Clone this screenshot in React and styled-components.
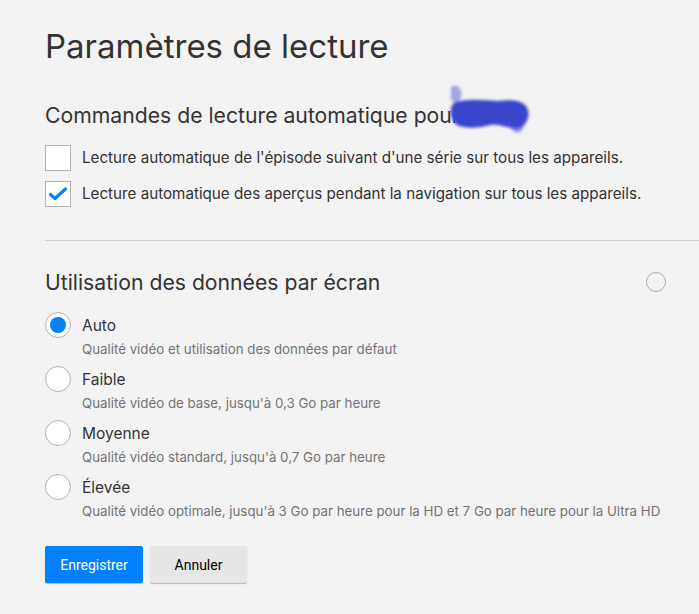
import styled, { createGlobalStyle } from "styled-components";

const GlobalStyle = createGlobalStyle`
  html, body {
    margin: 0;
    background: #f3f3f3;
  }
  body {
    font-family: "Inter", "Roboto", "Liberation Sans", Arial, sans-serif;
    color: #333;
  }
`;

const Page = styled.div`
  width: 699px;
  height: 614px;
  overflow: hidden;
  padding: 26px 0 0 45px;
  box-sizing: border-box;
`;

const Title = styled.h1`
  margin: 0;
  font-size: 33px;
  font-weight: 400;
  line-height: 40px;
  color: #333;
`;

const SectionTitle = styled.h2`
  position: relative;
  margin: 0;
  font-size: 21.2px;
  font-weight: 400;
  line-height: 28px;
  color: #333;
  display: flex;
  align-items: center;
  justify-content: ${({ $spread }) => ($spread ? "space-between" : "flex-start")};
  padding-right: 33px;
`;

const Playback = styled.section`
  margin-top: 35px;
  padding-bottom: 33px;
  border-bottom: 1px solid #cfcfcf;
`;

const CheckList = styled.div`
  margin-top: 16px;
  display: flex;
  flex-direction: column;
  gap: 10px;
`;

const CheckRow = styled.label`
  display: flex;
  align-items: center;
  gap: 11px;
  font-size: 15.2px;
  line-height: 20px;
  color: #333;
`;

const Box = styled.span`
  width: 26px;
  height: 26px;
  box-sizing: border-box;
  border: 1px solid #b3b3b3;
  background: #fff;
  display: flex;
  align-items: center;
  justify-content: center;
  flex: none;
`;

const Scribble = styled.svg`
  position: absolute;
  left: 400px;
  top: -20px;
  pointer-events: none;
`;

const Usage = styled.section`
  margin-top: 27px;
`;

const Loader = styled.span`
  width: 20px;
  height: 20px;
  box-sizing: border-box;
  border-radius: 50%;
  border: 1px solid #a9a8b4;
  flex: none;
`;

const RadioList = styled.div`
  margin-top: 16px;
  display: flex;
  flex-direction: column;
  gap: 8px;
`;

const Option = styled.div`
  display: grid;
  grid-template-columns: 26px 1fr;
  column-gap: 11px;
  row-gap: 2px;
  align-items: center;
`;

const Radio = styled.span`
  width: 26px;
  height: 26px;
  box-sizing: border-box;
  border-radius: 50%;
  border: 1px solid #b3b3b3;
  background: #fff;
  display: flex;
  align-items: center;
  justify-content: center;

  &::after {
    content: "";
    width: 16px;
    height: 16px;
    border-radius: 50%;
    background: ${({ $on }) => ($on ? "#0080ff" : "transparent")};
  }
`;

const OptionName = styled.span`
  font-size: 15.5px;
  color: #333;
`;

const OptionHint = styled.span`
  grid-column: 2;
  font-size: 13.3px;
  line-height: 18px;
  color: #737373;
`;

const Actions = styled.div`
  margin-top: 26px;
  display: flex;
  gap: 7px;
`;

const Button = styled.button`
  width: ${({ $w }) => $w}px;
  height: 37px;
  border: 0;
  border-radius: 2px;
  font-family: "Roboto", "Liberation Sans", Arial, sans-serif;
  font-size: 14px;
  cursor: pointer;
  background: ${({ $primary }) => ($primary ? "#0080ff" : "#e6e6e6")};
  color: ${({ $primary }) => ($primary ? "#fff" : "#000")};
  box-shadow: 0 1px 1px rgba(0, 0, 0, 0.25);
`;

const options = [
  { name: "Auto", hint: "Qualité vidéo et utilisation des données par défaut", on: true },
  { name: "Faible", hint: "Qualité vidéo de base, jusqu'à 0,3 Go par heure" },
  { name: "Moyenne", hint: "Qualité vidéo standard, jusqu'à 0,7 Go par heure" },
  { name: "Élevée", hint: "Qualité vidéo optimale, jusqu'à 3 Go par heure pour la HD et 7 Go par heure pour la Ultra HD" },
];

const Check = () => (
  <svg width="20" height="16" viewBox="0 0 20 16">
    <path d="M2.5 8.5 L7 12.5 L17.5 3" fill="none" stroke="#0080ff" strokeWidth="3.2" strokeLinecap="round" strokeLinejoin="round" />
  </svg>
);

export default function App() {
  return (
    <Page>
      <GlobalStyle />
      <Title>Paramètres de lecture</Title>

      <Playback>
        <SectionTitle>
          Commandes de lecture automatique pour
          <Scribble width="90" height="60" viewBox="0 0 90 60">
            <defs>
              <filter id="smudge" x="-20%" y="-20%" width="140%" height="140%">
                <feGaussianBlur stdDeviation="1.6" />
              </filter>
            </defs>
            <g filter="url(#smudge)" fill="#3b45cc">
              <path opacity="0.45" d="M6 6 C12 2 18 8 16 16 C15 22 9 24 6 18 Z" />
              <path d="M9 22 C20 17 38 19 52 20 C62 19 74 18 80 24 C86 30 84 42 76 46 C66 50 56 42 46 44 C34 47 20 48 12 44 C6 40 3 28 9 22 Z" />
              <path opacity="0.6" d="M70 34 C78 36 82 44 76 50 C70 54 64 48 66 42 Z" />
            </g>
          </Scribble>
        </SectionTitle>

        <CheckList>
          <CheckRow>
            <Box />
            Lecture automatique de l'épisode suivant d'une série sur tous les appareils.
          </CheckRow>
          <CheckRow>
            <Box>
              <Check />
            </Box>
            Lecture automatique des aperçus pendant la navigation sur tous les appareils.
          </CheckRow>
        </CheckList>
      </Playback>

      <Usage>
        <SectionTitle $spread>
          Utilisation des données par écran
          <Loader />
        </SectionTitle>

        <RadioList>
          {options.map((o) => (
            <Option key={o.name}>
              <Radio $on={o.on} />
              <OptionName>{o.name}</OptionName>
              <OptionHint>{o.hint}</OptionHint>
            </Option>
          ))}
        </RadioList>

        <Actions>
          <Button $primary $w={98}>Enregistrer</Button>
          <Button $w={97}>Annuler</Button>
        </Actions>
      </Usage>
    </Page>
  );
}
